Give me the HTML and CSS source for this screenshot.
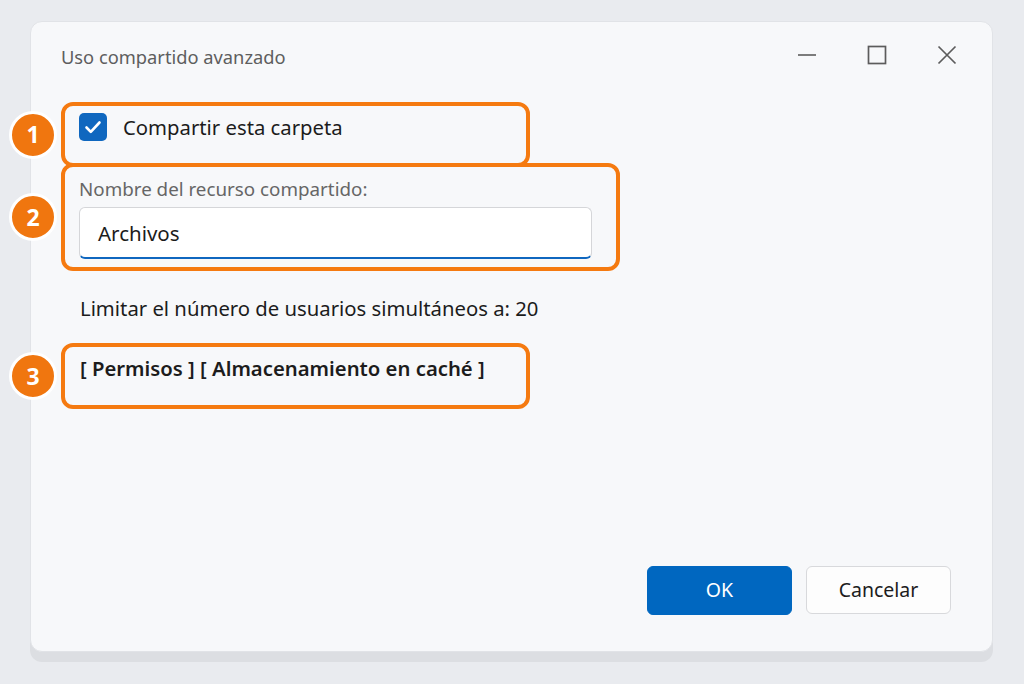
FILE: index.html
```html
<!DOCTYPE html>
<html lang="es">
<head>
<meta charset="utf-8">
<title>Uso compartido avanzado</title>
<link rel="stylesheet" href="styles.css">
</head>
<body>
<div class="window">
  <header class="titlebar">
    <span class="title">Uso compartido avanzado</span>
    <div class="controls">
      <span class="ctl">
        <svg width="20" height="20" viewBox="0 0 20 20"><path d="M1 10h18" stroke="#5c5c5c" stroke-width="1.6" fill="none"/></svg>
      </span>
      <span class="ctl">
        <svg width="20" height="20" viewBox="0 0 20 20"><rect x="1.5" y="1.5" width="17" height="17" stroke="#5c5c5c" stroke-width="1.7" fill="none"/></svg>
      </span>
      <span class="ctl">
        <svg width="20" height="20" viewBox="0 0 20 20"><path d="M1.5 1.5l17 17M18.5 1.5l-17 17" stroke="#5c5c5c" stroke-width="1.7" fill="none"/></svg>
      </span>
    </div>
  </header>

  <main class="content">
    <label class="check-row">
      <span class="checkbox">
        <svg width="28" height="28" viewBox="0 0 28 28"><path d="M7.5 14.5l4.3 4.3 8.7-9.3" stroke="#fff" stroke-width="2.6" fill="none" stroke-linecap="round" stroke-linejoin="round"/></svg>
      </span>
      <span class="check-label">Compartir esta carpeta</span>
    </label>

    <div class="field">
      <span class="field-label">Nombre del recurso compartido:</span>
      <div class="input">Archivos</div>
    </div>

    <p class="limit">Limitar el número de usuarios simultáneos a: 20</p>

    <p class="links">[ Permisos ] [ Almacenamiento en caché ]</p>
  </main>

  <footer class="actions">
    <button class="btn primary">OK</button>
    <button class="btn">Cancelar</button>
  </footer>

  <div class="mark mark-1"><span class="badge">1</span></div>
  <div class="mark mark-2"><span class="badge">2</span></div>
  <div class="mark mark-3"><span class="badge">3</span></div>
</div>
</body>
</html>
```

FILE: styles.css
```css
* { box-sizing: border-box; }

html, body {
  margin: 0;
  padding: 0;
  width: 1024px;
  height: 684px;
  overflow: hidden;
  background: #e9ebef;
  font-family: "Noto Sans", "Open Sans", sans-serif;
  color: #1c1c1c;
}

.window {
  position: relative;
  margin: 21px 0 0 30px;
  width: 963px;
  height: 631px;
  background: #f7f8fa;
  border: 1px solid #e1e3e7;
  border-radius: 12px;
  box-shadow: 0 10px 0 #dcdee2;
  display: flex;
  flex-direction: column;
}

.titlebar {
  height: 68px;
  display: flex;
  align-items: center;
  justify-content: space-between;
  padding: 0 35px 0 30px;
}

.title {
  font-size: 18.3px;
  line-height: 24px;
  color: #5e5e5e;
  margin-top: 2px;
}

.controls {
  display: flex;
  gap: 50px;
  align-items: center;
  margin-top: -2px;
}

.ctl {
  display: flex;
  width: 20px;
  height: 20px;
}

.content {
  flex: 1;
  padding: 22px 0 0 48px;
  display: flex;
  flex-direction: column;
}

.check-row {
  display: flex;
  align-items: center;
  gap: 16px;
  height: 30px;
}

.checkbox {
  width: 28px;
  height: 28px;
  border-radius: 5px;
  background: #0f67bf;
  display: flex;
}

.check-label {
  font-size: 20.3px;
  line-height: 28px;
  color: #1c1c1c;
}

.field {
  margin-top: 35px;
  display: flex;
  flex-direction: column;
}

.field-label {
  font-size: 18.8px;
  line-height: 24px;
  color: #666;
}

.input {
  margin-top: 6px;
  width: 513px;
  height: 52px;
  background: #fff;
  border: 1px solid #d5d6d9;
  border-bottom: 2px solid #0f67bf;
  border-radius: 6px;
  padding: 0 0 0 18px;
  display: flex;
  align-items: center;
  font-size: 20.5px;
  color: #1c1c1c;
}

.limit {
  margin: 35px 0 0 1px;
  font-size: 20.3px;
  line-height: 28px;
  color: #1c1c1c;
}

.links {
  margin: 32px 0 0 1px;
  font-size: 20.3px;
  line-height: 28px;
  font-weight: 600;
  color: #1c1c1c;
}

.actions {
  display: flex;
  justify-content: flex-end;
  gap: 14px;
  padding: 0 41px 36px 0;
}

.btn {
  width: 145px;
  height: 48px;
  border-radius: 6px;
  border: 1px solid #d8d9dc;
  background: #fdfdfd;
  font-family: inherit;
  font-size: 19.5px;
  color: #1c1c1c;
  padding: 0 0 2px;
}

.btn.primary {
  height: 49px;
  background: #0067c0;
  border-color: #0067c0;
  color: #fff;
}

/* callout frames laid over the dialog */
.mark {
  position: absolute;
  left: 30px;
  border: 4px solid #f57a10;
  border-radius: 12px;
}

.mark-1 { top: 80px; width: 469px; height: 65px; z-index: 2; }
.mark-2 { top: 141px; width: 559px; height: 108px; z-index: 1; }
.mark-3 { top: 321px; width: 469px; height: 66px; z-index: 1; }

.badge {
  position: absolute;
  left: -56px;
  top: 50%;
  transform: translateY(-50%);
  width: 48px;
  height: 48px;
  border-radius: 50%;
  background: #f0760f;
  border: 3px solid #fff;
  color: #fff;
  font-weight: 700;
  font-size: 23px;
  display: flex;
  align-items: center;
  justify-content: center;
  padding-bottom: 1px;
}
```
